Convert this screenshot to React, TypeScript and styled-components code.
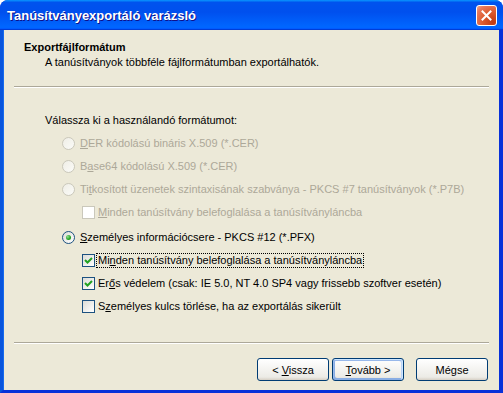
import React from 'react';
import styled, { createGlobalStyle } from 'styled-components';

const GlobalStyle = createGlobalStyle`
  html, body { margin: 0; padding: 0; background: #ffffff; }
  body { font-family: "Liberation Sans", Arial, sans-serif; font-size: 11px; }
`;

type Part = [string, string, string];

type Option = {
  kind: 'radio' | 'check';
  label: Part;
  disabled?: boolean;
  checked?: boolean;
  nested?: boolean;
  focused?: boolean;
  spaced?: boolean;
};

const options: Option[] = [
  { kind: 'radio', label: ['', 'D', 'ER kódolású bináris X.509 (*.CER)'], disabled: true },
  { kind: 'radio', label: ['B', 'a', 'se64 kódolású X.509 (*.CER)'], disabled: true },
  {
    kind: 'radio',
    label: ['Ti', 't', 'kosított üzenetek szintaxisának szabványa - PKCS #7 tanúsítványok (*.P7B)'],
    disabled: true,
  },
  {
    kind: 'check',
    label: ['', 'M', 'inden tanúsítvány belefoglalása a tanúsítványláncba'],
    disabled: true,
    nested: true,
  },
  { kind: 'radio', label: ['', 'S', 'zemélyes információcsere - PKCS #12 (*.PFX)'], checked: true, spaced: true },
  {
    kind: 'check',
    label: ['Mi', 'n', 'den tanúsítvány belefoglalása a tanúsítványláncba'],
    checked: true,
    nested: true,
    focused: true,
  },
  {
    kind: 'check',
    label: ['Er', 'ő', 's védelem (csak: IE 5.0, NT 4.0 SP4 vagy frissebb szoftver esetén)'],
    checked: true,
    nested: true,
  },
  {
    kind: 'check',
    label: ['S', 'z', 'emélyes kulcs törlése, ha az exportálás sikerült'],
    nested: true,
  },
];

function App() {
  return (
    <>
      <GlobalStyle />
      <Window>
        <TitleBar>
          <TitleText>Tanúsítványexportáló varázsló</TitleText>
          <CloseButton aria-label="Bezárás">
            <svg width="11" height="11" viewBox="0 0 11 11">
              <path d="M1.5 1.5 L9.5 9.5 M9.5 1.5 L1.5 9.5" stroke="#ffffff" strokeWidth="2" strokeLinecap="square" />
            </svg>
          </CloseButton>
        </TitleBar>
        <Client>
          <Header>
            <HeaderTitle>Exportfájlformátum</HeaderTitle>
            <HeaderSub>A tanúsítványok többféle fájlformátumban exportálhatók.</HeaderSub>
          </Header>
          <Etched />
          <Main>
            <Prompt>Válassza ki a használandó formátumot:</Prompt>
            <OptionList>
              {options.map((o, i) => (
                <Row key={i} $nested={o.nested} $spaced={o.spaced}>
                  {o.kind === 'radio' ? (
                    <Radio $disabled={o.disabled}>{o.checked && <Dot />}</Radio>
                  ) : (
                    <Check $disabled={o.disabled}>
                      {o.checked && (
                        <svg width="11" height="11" viewBox="0 0 11 11">
                          <path d="M2 5 L4.5 7.5 L9 3" stroke="#21a121" strokeWidth="2" fill="none" />
                        </svg>
                      )}
                    </Check>
                  )}
                  <Label $disabled={o.disabled} $focused={o.focused} $check={o.kind === 'check'}>
                    {o.label[0]}
                    <Key>{o.label[1]}</Key>
                    {o.label[2]}
                  </Label>
                </Row>
              ))}
            </OptionList>
          </Main>
          <Etched />
          <ButtonBar>
            <PushButton>
              <span>
                &lt; <Key>V</Key>issza
              </span>
            </PushButton>
            <PushButton $default>
              <span>
                <Key>T</Key>ovább &gt;
              </span>
            </PushButton>
            <PushButton $spaced>
              <span>Mégse</span>
            </PushButton>
          </ButtonBar>
        </Client>
      </Window>
    </>
  );
}

export default App;

const Window = styled.div`
  width: 503px;
  height: 393px;
  display: flex;
  flex-direction: column;
  border-radius: 8px 8px 0 0;
  overflow: hidden;
  background: #0831d9;
`;

const TitleBar = styled.div`
  height: 30px;
  flex-shrink: 0;
  display: flex;
  align-items: center;
  justify-content: space-between;
  padding: 0 6px 0 7px;
  background: linear-gradient(
    180deg,
    #0997ff,
    #0053ee 8%,
    #0050ee 40%,
    #0066ff 88%,
    #0066ff 93%,
    #005bff 95%,
    #003dd7 96%,
    #003dd7
  );
`;

const TitleText = styled.div`
  font-family: "Liberation Sans", Arial, sans-serif;
  font-weight: bold;
  font-size: 13px;
  color: #ffffff;
  text-shadow: 1px 1px #0f1089;
`;

const CloseButton = styled.div`
  width: 21px;
  height: 21px;
  box-sizing: border-box;
  border: 1px solid #ffffff;
  border-radius: 3px;
  display: flex;
  align-items: center;
  justify-content: center;
  background: radial-gradient(circle at 85% 85%, #c13a12 0%, #dc5a2e 45%, #e8795a 80%, #f3a88f 100%);
`;

const Client = styled.div`
  flex: 1;
  display: flex;
  flex-direction: column;
  background: #ece9d8;
  border-left: 3px solid #0855dd;
  border-right: 4px solid #0831d9;
  border-bottom: 3px solid #0831d9;
  box-shadow: 1px 0 0 #166aee inset;
`;

const Header = styled.div`
  height: 56px;
  box-sizing: border-box;
  padding: 11px 0 0 21px;
`;

const HeaderTitle = styled.div`
  font-weight: bold;
  line-height: 13px;
  color: #000000;
`;

const HeaderSub = styled.div`
  line-height: 13px;
  margin-top: 2px;
  padding-left: 21px;
  color: #000000;
`;

const Etched = styled.div`
  height: 0;
  margin: 0 10px 0 11px;
  border-top: 1px solid #aca899;
  border-bottom: 1px solid #ffffff;
`;

const Main = styled.div`
  flex: 1;
  padding: 26px 0 0 42px;
`;

const Prompt = styled.div`
  line-height: 13px;
  color: #000000;
`;

const OptionList = styled.div`
  margin: 5px 0 0 17px;
  display: flex;
  flex-direction: column;
`;

const Row = styled.div<{ $nested?: boolean; $spaced?: boolean }>`
  height: 23px;
  display: flex;
  align-items: center;
  padding-left: ${(p) => (p.$nested ? '20px' : '0')};
  margin-top: ${(p) => (p.$spaced ? '2px' : '0')};
`;

const Radio = styled.div<{ $disabled?: boolean }>`
  width: 13px;
  height: 13px;
  box-sizing: border-box;
  border-radius: 50%;
  border: 1px solid ${(p) => (p.$disabled ? '#cac8bb' : '#1c5180')};
  background: ${(p) =>
    p.$disabled
      ? 'linear-gradient(135deg, #efeee6, #fbfbf8)'
      : 'linear-gradient(135deg, #dcdcd7, #ffffff)'};
  display: flex;
  align-items: center;
  justify-content: center;
  flex-shrink: 0;
`;

const Dot = styled.div`
  width: 5px;
  height: 5px;
  border-radius: 50%;
  background: radial-gradient(circle at 35% 35%, #8fe08f, #21a121 60%, #1a8a1a);
`;

const Check = styled.div<{ $disabled?: boolean }>`
  width: 13px;
  height: 13px;
  box-sizing: border-box;
  border: 1px solid ${(p) => (p.$disabled ? '#cac8bb' : '#1c5180')};
  background: ${(p) => (p.$disabled ? '#ffffff' : 'linear-gradient(135deg, #dcdcd7, #ffffff)')};
  display: flex;
  align-items: center;
  justify-content: center;
  flex-shrink: 0;
`;

const Label = styled.span<{ $disabled?: boolean; $focused?: boolean; $check?: boolean }>`
  margin-left: ${(p) => (p.$check ? '1px' : '3px')};
  padding: 0 1px;
  line-height: 13px;
  white-space: nowrap;
  border: 1px ${(p) => (p.$focused ? 'dotted #000000' : 'solid transparent')};
  color: ${(p) => (p.$disabled ? '#aca899' : '#000000')};
`;

const Key = styled.span`
  text-decoration: underline;
`;

const ButtonBar = styled.div`
  display: flex;
  justify-content: flex-end;
  gap: 3px;
  padding: 14px 11px 9px 0;
`;

const PushButton = styled.div<{ $default?: boolean; $spaced?: boolean }>`
  width: 72px;
  height: 23px;
  box-sizing: border-box;
  display: flex;
  align-items: center;
  justify-content: center;
  margin-left: ${(p) => (p.$spaced ? '9px' : '0')};
  border: 1px solid #003c74;
  border-radius: 3px;
  background: linear-gradient(180deg, #ffffff, #ecebe6 86%, #d6d0c5);
  color: #000000;
  white-space: pre;
  box-shadow: ${(p) =>
    p.$default
      ? 'inset -1px 1px #cee7ff, inset 1px 2px #98b8ea, inset -2px 2px #bcd4f6, inset 1px -1px #89ade4, inset 2px -2px #89ade4'
      : 'none'};
`;
